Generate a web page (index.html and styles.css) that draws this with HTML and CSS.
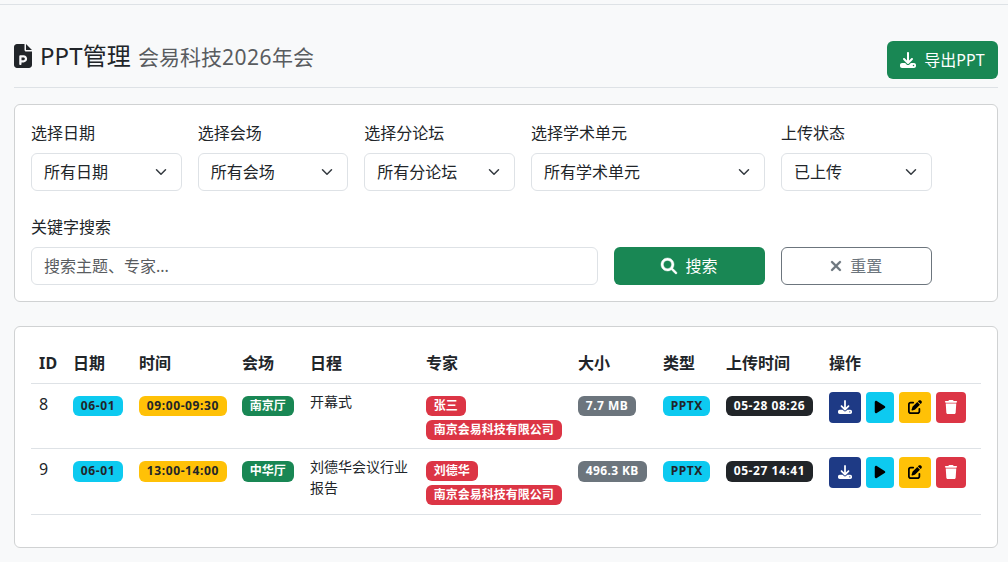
FILE: index.html
```
<!DOCTYPE html>
<html lang="zh-CN">
<head>
<meta charset="utf-8">
<title>PPT管理</title>
<link rel="stylesheet" href="styles.css">
</head>
<body>
<svg class="sprite" aria-hidden="true">
  <symbol id="i-ppt" viewBox="0 0 384 512"><path d="M64 0C28.700 0 0 28.700 0 64V448c0 35.300 28.700 64 64 64H320c35.300 0 64-28.700 64-64V160H256c-17.700 0-32-14.300-32-32V0H64zM256 0V128H384L256 0zM136 240h68c42 0 76 34 76 76s-34 76-76 76H160v32c0 13.300-10.700 24-24 24s-24-10.700-24-24V368 264c0-13.300 10.700-24 24-24zm68 104c15.500 0 28-12.500 28-28s-12.500-28-28-28H160v56h44z"/></symbol>
  <symbol id="i-download" viewBox="0 0 512 512"><path d="M288 32c0-17.700-14.300-32-32-32s-32 14.300-32 32V274.700l-73.400-73.400c-12.500-12.500-32.800-12.500-45.300 0s-12.500 32.800 0 45.300l128 128c12.500 12.500 32.800 12.500 45.300 0l128-128c12.500-12.500 12.500-32.800 0-45.300s-32.800-12.500-45.300 0L288 274.700V32zM64 352c-35.300 0-64 28.700-64 64v32c0 35.300 28.700 64 64 64H448c35.300 0 64-28.700 64-64V416c0-35.300-28.700-64-64-64H346.500l-45.300 45.300c-25 25-65.500 25-90.500 0L165.500 352H64zm368 56a24 24 0 1 1 0 48 24 24 0 1 1 0-48z"/></symbol>
  <symbol id="i-search" viewBox="0 0 512 512"><path stroke="currentColor" stroke-width="14" d="M416 208c0 45.900-14.900 88.300-40 122.700L502.600 457.400c12.500 12.500 12.500 32.800 0 45.300s-32.800 12.500-45.300 0L330.700 376c-34.400 25.200-76.800 40-122.700 40C93.100 416 0 322.900 0 208S93.100 0 208 0S416 93.100 416 208zM208 340a132 132 0 1 0 0-264 132 132 0 1 0 0 264z"/></symbol>
  <symbol id="i-x" viewBox="0 0 384 512"><path stroke="currentColor" stroke-width="10" d="M342.600 150.600c12.500-12.500 12.500-32.800 0-45.300s-32.800-12.500-45.300 0L192 210.700 86.600 105.400c-12.500-12.500-32.800-12.500-45.300 0s-12.500 32.800 0 45.300L146.700 256 41.400 361.400c-12.500 12.500-12.500 32.800 0 45.300s32.800 12.500 45.300 0L192 301.300 297.400 406.600c12.500 12.500 32.800 12.500 45.300 0s12.500-32.800 0-45.300L237.300 256 342.600 150.600z"/></symbol>
  <symbol id="i-play" viewBox="0 0 384 512"><path d="M73 39c-14.800-9.100-33.400-9.400-48.500-.9S0 62.600 0 80V432c0 17.400 9.400 33.400 24.500 41.900s33.700 8.100 48.500-.9L361 297c14.300-8.700 23-24.200 23-41s-8.700-32.200-23-41L73 39z"/></symbol>
  <symbol id="i-edit" viewBox="0 0 512 512"><path d="M471.600 21.700c-21.900-21.900-57.300-21.900-79.200 0L362.300 51.700l97.900 97.900 30.100-30.100c21.900-21.900 21.900-57.300 0-79.200L471.600 21.700zm-299.200 220c-6.100 6.100-10.800 13.600-13.500 21.900l-29.600 88.800c-2.900 8.600-.6 18.100 5.800 24.600s15.900 8.700 24.600 5.800l88.800-29.600c8.200-2.700 15.700-7.400 21.900-13.500L437.700 172.300 339.700 74.300 172.400 241.700zM96 64C43 64 0 107 0 160V416c0 53 43 96 96 96H352c53 0 96-43 96-96V320c0-17.700-14.300-32-32-32s-32 14.300-32 32v96c0 17.700-14.300 32-32 32H96c-17.700 0-32-14.300-32-32V160c0-17.700 14.300-32 32-32h96c17.700 0 32-14.300 32-32s-14.300-32-32-32H96z"/></symbol>
  <symbol id="i-trash" viewBox="0 0 448 512"><path d="M135.200 17.700L128 32H32C14.300 32 0 46.300 0 64S14.300 96 32 96H416c17.700 0 32-14.300 32-32s-14.300-32-32-32H320l-7.200-14.300C307.400 6.800 296.300 0 284.200 0H163.800c-12.100 0-23.200 6.800-28.600 17.700zM416 128H32L53.200 467c1.600 25.300 22.600 45 47.900 45H346.900c25.300 0 46.300-19.700 47.900-45L416 128z"/></symbol>
  <symbol id="i-chevron" viewBox="0 0 16 16"><path fill="none" stroke="#343a40" stroke-linecap="round" stroke-linejoin="round" stroke-width="2" d="m2 5 6 6 6-6"/></symbol>
</svg>
<div class="topbar"></div>
<main class="page">
  <header class="page-head">
    <h1 class="title"><svg class="icon icon-title"><use href="#i-ppt"/></svg><span class="title-text">PPT管理</span><small class="subtitle">会易科技<span class="year">2026</span>年会</small></h1>
    <button class="btn btn-success btn-export"><svg class="icon"><use href="#i-download"/></svg><span class="export-text">导出PPT</span></button>
  </header>

  <section class="card">
    <form class="filters">
      <div class="field"><label class="label">选择日期</label><div class="control select">所有日期<svg class="chevron"><use href="#i-chevron"/></svg></div></div>
      <div class="field"><label class="label">选择会场</label><div class="control select">所有会场<svg class="chevron"><use href="#i-chevron"/></svg></div></div>
      <div class="field"><label class="label">选择分论坛</label><div class="control select">所有分论坛<svg class="chevron"><use href="#i-chevron"/></svg></div></div>
      <div class="field"><label class="label">选择学术单元</label><div class="control select">所有学术单元<svg class="chevron"><use href="#i-chevron"/></svg></div></div>
      <div class="field"><label class="label">上传状态</label><div class="control select">已上传<svg class="chevron"><use href="#i-chevron"/></svg></div></div>
      <div class="field field-keyword"><label class="label">关键字搜索</label><input class="control" type="text" placeholder="搜索主题、专家..."></div>
      <button type="button" class="btn btn-success"><svg class="icon"><use href="#i-search"/></svg>搜索</button>
      <button type="button" class="btn btn-outline"><svg class="icon icon-x"><use href="#i-x"/></svg>重置</button>
    </form>
  </section>

  <section class="card card-table">
    <table class="table">
      <colgroup><col class="c-id"><col class="c-date"><col class="c-time"><col class="c-venue"><col class="c-agenda"><col class="c-expert"><col class="c-size"><col class="c-type"><col class="c-upload"><col class="c-ops"></colgroup>
      <thead>
        <tr><th>ID</th><th>日期</th><th>时间</th><th>会场</th><th>日程</th><th>专家</th><th>大小</th><th>类型</th><th>上传时间</th><th>操作</th></tr>
      </thead>
      <tbody>
        <tr>
          <td>8</td>
          <td><span class="badge info latin">06-01</span></td>
          <td><span class="badge warning latin">09:00-09:30</span></td>
          <td><span class="badge success">南京厅</span></td>
          <td class="agenda">开幕式</td>
          <td><div class="stack"><span class="badge danger">张三</span><span class="badge danger">南京会易科技有限公司</span></div></td>
          <td><span class="badge secondary size">7.7 MB</span></td>
          <td><span class="badge info size">PPTX</span></td>
          <td><span class="badge dark upload">05-28 08:26</span></td>
          <td><div class="ops"><a class="op op-download"><svg class="icon"><use href="#i-download"/></svg></a><a class="op op-play"><svg class="icon"><use href="#i-play"/></svg></a><a class="op op-edit"><svg class="icon"><use href="#i-edit"/></svg></a><a class="op op-trash"><svg class="icon"><use href="#i-trash"/></svg></a></div></td>
        </tr>
        <tr>
          <td>9</td>
          <td><span class="badge info latin">06-01</span></td>
          <td><span class="badge warning latin">13:00-14:00</span></td>
          <td><span class="badge success">中华厅</span></td>
          <td class="agenda">刘德华会议行业报告</td>
          <td><div class="stack"><span class="badge danger">刘德华</span><span class="badge danger">南京会易科技有限公司</span></div></td>
          <td><span class="badge secondary size-kb">496.3 KB</span></td>
          <td><span class="badge info size">PPTX</span></td>
          <td><span class="badge dark upload">05-27 14:41</span></td>
          <td><div class="ops"><a class="op op-download"><svg class="icon"><use href="#i-download"/></svg></a><a class="op op-play"><svg class="icon"><use href="#i-play"/></svg></a><a class="op op-edit"><svg class="icon"><use href="#i-edit"/></svg></a><a class="op op-trash"><svg class="icon"><use href="#i-trash"/></svg></a></div></td>
        </tr>
      </tbody>
    </table>
  </section>
</main>
</body>
</html>
```
FILE: styles.css
```
* { box-sizing: border-box; }
body {
  margin: 0;
  height: 562px;
  overflow: hidden;
  background: #f8f9fa;
  color: #212529;
  font: 16px/24px "Noto Sans", "Noto Sans CJK SC", sans-serif;
}
.sprite { display: none; }
.topbar { height: 5px; border-bottom: 1px solid #dee2e6; }
.page { padding: 36px 10px 0 14px; }
.icon { width: 16px; height: 16px; fill: currentColor; flex: none; overflow: visible; }
symbol { overflow: visible; }

.page-head {
  display: flex;
  justify-content: space-between;
  align-items: flex-start;
  height: 47px;
  margin-bottom: 16px;
  border-bottom: 1px solid #dee2e6;
}
.title {
  display: flex;
  align-items: baseline;
  margin: 0;
  font-size: 24px;
  font-weight: 400;
  line-height: 29px;
}
.icon-title { width: 18px; height: 24px; margin: 0 8px 2px 0; align-self: center; }
.title-text { width: 98px; white-space: nowrap; letter-spacing: .1px; }
.subtitle { font-size: 21px; color: #595c5f; white-space: nowrap; }
.year { letter-spacing: .5px; }

.btn {
  display: flex;
  align-items: center;
  justify-content: center;
  gap: 8px;
  height: 38px;
  padding: 0;
  border: 1px solid transparent;
  border-radius: 6px;
  font: inherit;
  white-space: nowrap;
}
.btn-success { background: #198754; color: #fff; }
.btn-outline { background: #fff; border-color: #6c757d; color: #6c757d; }
.btn-export { width: 111px; }
.icon-x { width: 12px; }

.card {
  padding: 16px;
  border: 1px solid #d0d2d3;
  border-radius: 6px;
  background: #fff;
}
.filters {
  display: grid;
  grid-template-columns: 150.67px 150.67px 150.67px 234px 150.67px;
  column-gap: 16px;
  row-gap: 24px;
  align-items: end;
  height: 164px;
}
.field { display: flex; flex-direction: column; gap: 8px; }
.field-keyword { grid-column: 1 / 4; width: 567px; }
.filters .btn-success { grid-column: 4; width: 151px; justify-self: end; }
.label { display: block; line-height: 24px; }
.control {
  width: 100%;
  height: 38px;
  padding: 6px 12px;
  border: 1px solid #dee2e6;
  border-radius: 6px;
  background: #fff;
  color: #212529;
  font: inherit;
}
.control::placeholder { color: #595c5f; opacity: 1; }
.select { display: flex; justify-content: space-between; align-items: center; white-space: nowrap; }
.chevron { width: 16px; height: 12px; }

.card-table { margin-top: 24px; height: 222px; }
.table { width: 950px; table-layout: fixed; border-collapse: separate; border-spacing: 0; }
.c-id { width: 34px; }
.c-date { width: 66px; }
.c-time { width: 103px; }
.c-venue { width: 68px; }
.c-agenda { width: 116px; }
.c-expert { width: 152px; }
.c-size { width: 85px; }
.c-type { width: 63px; }
.c-upload { width: 103px; }
.c-ops { width: 160px; }
th, td { padding: 8px; border-bottom: 1px solid #dee2e6; text-align: left; vertical-align: top; }
th { height: 41px; font-weight: 700; white-space: nowrap; }
th:first-child { letter-spacing: .3px; }
td { height: 65px; }
tbody tr:last-child td { height: 66px; }
.agenda { padding-top: 7px; font-size: 14px; line-height: 21px; }

.badge {
  display: block;
  width: max-content;
  height: 20px;
  margin-top: 4px;
  padding: 0 7.8px;
  border-radius: 6px;
  color: #fff;
  font-size: 12px;
  font-weight: 700;
  line-height: 20px;
  white-space: nowrap;
}
tbody tr:last-child .badge { height: 21px; }
.latin { letter-spacing: .6px; }
.size { letter-spacing: .5px; }
.size-kb { letter-spacing: .38px; }
.upload { letter-spacing: .55px; }
.stack { display: flex; flex-direction: column; height: 48px; }
.info { background: #0dcaf0; color: #212529; }
.warning { background: #ffc107; color: #212529; }
.success { background: #198754; }
.danger { background: #dc3545; }
.secondary { background: #6c757d; }
.dark { background: #212529; }

.ops { display: flex; gap: 5px; }
.op { display: flex; align-items: center; justify-content: center; height: 31px; padding-bottom: 1px; border-radius: 4px; color: #000; }
.op .icon { height: 14px; width: 14px; }
.op-download { width: 32px; background: #1e3a85; color: #fff; }
.op-play { width: 28px; background: #0dcaf0; }
.op-edit { width: 32px; background: #ffc107; }
.op-trash { width: 30px; background: #dc3545; color: #fff; }
```
